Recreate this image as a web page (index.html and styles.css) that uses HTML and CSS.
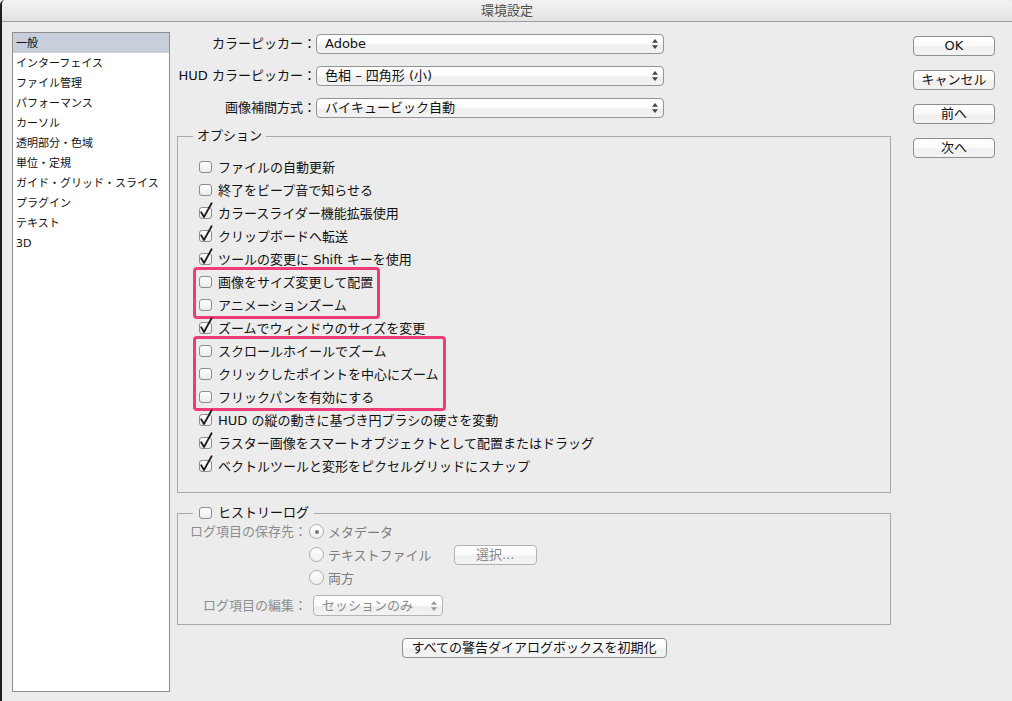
FILE: index.html
```html
<!DOCTYPE html>
<html lang="ja">
<head>
<meta charset="utf-8">
<title>環境設定</title>
<link rel="stylesheet" href="styles.css">
</head>
<body>
<div class="window">
  <header class="titlebar">環境設定</header>
  <div class="content">
    <ul class="sidebar">
      <li class="selected">一般</li>
      <li>インターフェイス</li>
      <li>ファイル管理</li>
      <li>パフォーマンス</li>
      <li>カーソル</li>
      <li>透明部分・色域</li>
      <li>単位・定規</li>
      <li>ガイド・グリッド・スライス</li>
      <li>プラグイン</li>
      <li>テキスト</li>
      <li>3D</li>
    </ul>

    <main class="main">
      <div class="selects">
        <label class="sel-label">カラーピッカー：</label>
        <div class="popup wide"><span>Adobe</span><svg class="arrows" viewBox="0 0 6 10"><path d="M0 3.8L3 0L6 3.8Z M0 6.2L6 6.2L3 10Z"/></svg></div>
        <label class="sel-label">HUD カラーピッカー：</label>
        <div class="popup wide"><span>色相 – 四角形 (小)</span><svg class="arrows" viewBox="0 0 6 10"><path d="M0 3.8L3 0L6 3.8Z M0 6.2L6 6.2L3 10Z"/></svg></div>
        <label class="sel-label">画像補間方式：</label>
        <div class="popup wide"><span>バイキュービック自動</span><svg class="arrows" viewBox="0 0 6 10"><path d="M0 3.8L3 0L6 3.8Z M0 6.2L6 6.2L3 10Z"/></svg></div>
      </div>

      <fieldset class="group options">
        <legend class="legend-text">オプション</legend>
        <div class="rows">
          <div class="row"><span class="cb"></span>ファイルの自動更新</div>
          <div class="row"><span class="cb"></span>終了をビープ音で知らせる</div>
          <div class="row"><span class="cb on"><svg viewBox="0 0 14 16"><path d="M2.2 10.2L5 15L12.6 1.2"/></svg></span>カラースライダー機能拡張使用</div>
          <div class="row"><span class="cb on"><svg viewBox="0 0 14 16"><path d="M2.2 10.2L5 15L12.6 1.2"/></svg></span>クリップボードへ転送</div>
          <div class="row"><span class="cb on"><svg viewBox="0 0 14 16"><path d="M2.2 10.2L5 15L12.6 1.2"/></svg></span>ツールの変更に Shift キーを使用</div>
          <div class="mark">
            <div class="row"><span class="cb"></span>画像をサイズ変更して配置</div>
            <div class="row"><span class="cb"></span>アニメーションズーム</div>
          </div>
          <div class="row"><span class="cb on"><svg viewBox="0 0 14 16"><path d="M2.2 10.2L5 15L12.6 1.2"/></svg></span>ズームでウィンドウのサイズを変更</div>
          <div class="mark">
            <div class="row"><span class="cb"></span>スクロールホイールでズーム</div>
            <div class="row"><span class="cb"></span>クリックしたポイントを中心にズーム</div>
            <div class="row"><span class="cb"></span>フリックパンを有効にする</div>
          </div>
          <div class="row"><span class="cb on"><svg viewBox="0 0 14 16"><path d="M2.2 10.2L5 15L12.6 1.2"/></svg></span>HUD の縦の動きに基づき円ブラシの硬さを変動</div>
          <div class="row"><span class="cb on"><svg viewBox="0 0 14 16"><path d="M2.2 10.2L5 15L12.6 1.2"/></svg></span>ラスター画像をスマートオブジェクトとして配置またはドラッグ</div>
          <div class="row"><span class="cb on"><svg viewBox="0 0 14 16"><path d="M2.2 10.2L5 15L12.6 1.2"/></svg></span>ベクトルツールと変形をピクセルグリッドにスナップ</div>
        </div>
      </fieldset>

      <fieldset class="group history">
        <legend class="legend-check"><span class="cb"></span>ヒストリーログ</legend>
        <div class="log-grid">
          <span class="dim-label">ログ項目の保存先：</span>
          <div class="radios">
            <div class="radio-row"><span class="radio sel"></span>メタデータ</div>
            <div class="radio-row"><span class="radio"></span>テキストファイル<span class="btn small dim">選択...</span></div>
            <div class="radio-row"><span class="radio"></span>両方</div>
          </div>
          <span class="dim-label edit-label">ログ項目の編集：</span>
          <div class="popup narrow dim"><span>セッションのみ</span><svg class="arrows" viewBox="0 0 6 10"><path d="M0 3.8L3 0L6 3.8Z M0 6.2L6 6.2L3 10Z"/></svg></div>
        </div>
      </fieldset>

      <div class="reset-wrap"><span class="btn reset">すべての警告ダイアログボックスを初期化</span></div>
    </main>

    <div class="buttons">
      <span class="btn side">OK</span>
      <span class="btn side">キャンセル</span>
      <span class="btn side">前へ</span>
      <span class="btn side">次へ</span>
    </div>
  </div>
</div>
</body>
</html>
```

FILE: styles.css
```css
* { box-sizing: border-box; }

html, body {
  margin: 0;
  padding: 0;
  background: #ececec;
}

body {
  font-family: "DejaVu Sans", "Noto Sans CJK JP", sans-serif;
  font-size: 13px;
  color: #111;
}

.window {
  width: 1012px;
  height: 701px;
  display: flex;
  flex-direction: column;
  background: #ececec;
  border-left: 2px solid #1e1e1e;
  border-top-left-radius: 5px;
  border-top-right-radius: 5px;
  overflow: hidden;
}

.titlebar {
  height: 22px;
  flex: none;
  background: linear-gradient(#f3f3f3, #e2e2e2);
  border-bottom: 1px solid #9e9e9e;
  text-align: center;
  font-size: 13px;
  line-height: 21px;
  color: #4d4d4d;
}

.content {
  flex: 1;
  display: flex;
  align-items: flex-start;
  padding: 10px 0 0 10px;
}

/* Sidebar */
.sidebar {
  list-style: none;
  margin: 0;
  padding: 0;
  width: 158px;
  height: 660px;
  flex: none;
  background: #fff;
  border: 1px solid #8f8f8f;
  font-size: 11px;
}

.sidebar li {
  height: 20px;
  line-height: 22px;
  overflow: hidden;
  padding-left: 3px;
  white-space: nowrap;
}

.sidebar li.selected {
  background: #c8cfda;
}

/* Main column */
.main {
  width: 714px;
  margin-left: 7px;
  padding-top: 2px;
  flex: none;
}

.selects {
  display: grid;
  grid-template-columns: 139px 348px;
  column-gap: 0;
  row-gap: 12px;
  align-items: center;
}

.sel-label {
  text-align: right;
  white-space: nowrap;
  line-height: 20px;
}

.popup {
  height: 20px;
  border: 1px solid #949494;
  border-radius: 4px;
  background: linear-gradient(#ffffff 0%, #fbfbfb 50%, #eeeeee 55%, #f3f3f3 100%);
  display: flex;
  align-items: center;
  justify-content: space-between;
  padding: 0 5px 0 8px;
  line-height: 18px;
  white-space: nowrap;
}

.arrows {
  width: 6px;
  height: 10px;
  fill: #444;
  flex: none;
}

.popup.narrow {
  width: 130px;
}

.popup.dim {
  color: #8a8a8a;
  border-color: #b4b4b4;
}

.popup.dim .arrows {
  fill: #999;
}

/* Group boxes */
.group {
  margin: 0;
  padding: 0;
  border: 1px solid #a9a9a9;
  min-width: 0;
}

.options {
  margin-top: 10px;
}

.legend-text {
  margin-left: 15px;
  padding: 0 4px;
  line-height: 16px;
  height: 16px;
}

.rows {
  padding: 11px 0 15px 21px;
}

.row {
  display: flex;
  align-items: center;
  gap: 6px;
  height: 23px;
  white-space: nowrap;
}

.mark {
  width: fit-content;
  margin: -3px 0 -3px -6px;
  padding: 0 1px 0 0;
  border: 3px solid #ef3b76;
  border-radius: 4px;
}

.mark .row {
  padding-left: 3px;
  padding-right: 3px;
}

/* Checkbox */
.cb {
  position: relative;
  display: inline-block;
  width: 13px;
  height: 12px;
  flex: none;
  border: 1px solid #8d8d8d;
  border-radius: 3px;
  background: linear-gradient(#ffffff, #ebebeb);
}

.cb svg {
  position: absolute;
  left: -1px;
  top: -6px;
  width: 14px;
  height: 16px;
  fill: none;
  stroke: #1c1c1c;
  stroke-width: 1.8;
  stroke-linecap: round;
  stroke-linejoin: round;
}

/* History */
.history {
  margin-top: 12px;
}

.legend-check {
  margin-left: 15px;
  padding: 0 5px 0 6px;
  display: flex;
  align-items: center;
  gap: 6px;
  line-height: 16px;
  height: 16px;
}

.log-grid {
  display: grid;
  grid-template-columns: 129px auto;
  column-gap: 2px;
  align-items: start;
  justify-content: start;
  padding: 0 0 8px 0;
  margin-top: -1px;
}

.dim-label {
  text-align: right;
  color: #8d8d8d;
  line-height: 23px;
  white-space: nowrap;
}

.edit-label {
  margin-top: 6px;
  line-height: 21px;
}

.radios {
  display: flex;
  flex-direction: column;
}

.radio-row {
  display: flex;
  align-items: center;
  gap: 4px;
  height: 23px;
  color: #7c7c7c;
  white-space: nowrap;
}

.radio {
  position: relative;
  width: 15px;
  height: 15px;
  border-radius: 50%;
  border: 1px solid #adadad;
  background: linear-gradient(#ffffff, #eeeeee);
  flex: none;
}

.radio.sel::after {
  content: "";
  position: absolute;
  left: 4.5px;
  top: 4.5px;
  width: 4px;
  height: 4px;
  border-radius: 50%;
  background: #7a7a7a;
}

.log-grid .popup.narrow {
  margin-top: 6px;
  margin-left: 4px;
  height: 21px;
}

/* Buttons */
.btn {
  display: inline-flex;
  align-items: center;
  justify-content: center;
  height: 20px;
  border: 1px solid #8e8e8e;
  border-radius: 4px;
  background: linear-gradient(#ffffff 0%, #fafafa 50%, #efefef 55%, #f4f4f4 100%);
  line-height: 18px;
  white-space: nowrap;
  color: #111;
}

.btn.small {
  width: 83px;
  margin-left: 18px;
}

.btn.dim {
  color: #8a8a8a;
  border-color: #b2b2b2;
}

.reset-wrap {
  display: flex;
  justify-content: center;
  margin-top: 13px;
}

.reset {
  width: 265px;
}

.buttons {
  margin-left: 22px;
  padding-top: 4px;
  display: flex;
  flex-direction: column;
  gap: 14px;
  flex: none;
}

.btn.side {
  width: 82px;
}
```
